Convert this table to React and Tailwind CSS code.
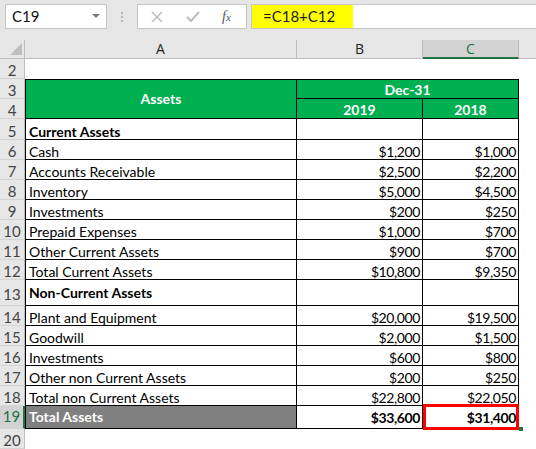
const rows = [
  { n: 5, label: 'Current Assets', bold: true },
  { n: 6, label: 'Cash', b: '$1,200', c: '$1,000' },
  { n: 7, label: 'Accounts Receivable', b: '$2,500', c: '$2,200' },
  { n: 8, label: 'Inventory', b: '$5,000', c: '$4,500' },
  { n: 9, label: 'Investments', b: '$200', c: '$250' },
  { n: 10, label: 'Prepaid Expenses', b: '$1,000', c: '$700' },
  { n: 11, label: 'Other Current Assets', b: '$900', c: '$700' },
  { n: 12, label: 'Total Current Assets', b: '$10,800', c: '$9,350' },
  { n: 13, label: 'Non-Current Assets', bold: true, tall: true },
  { n: 14, label: 'Plant and Equipment', b: '$20,000', c: '$19,500' },
  { n: 15, label: 'Goodwill', b: '$2,000', c: '$1,500' },
  { n: 16, label: 'Investments', b: '$600', c: '$800' },
  { n: 17, label: 'Other non Current Assets', b: '$200', c: '$250' },
  { n: 18, label: 'Total non Current Assets', b: '$22,800', c: '$22,050' },
]

const cellFont = { fontFamily: 'Lato, "Liberation Sans", sans-serif' }

function RowHead({ n, active, pb = 'pb-0' }) {
  return (
    <div
      className={
        'flex items-end justify-center border-b border-b-[#d4d4d4] text-[15px] leading-[15px] ' +
        pb +
        ' ' +
        (active
          ? 'bg-[#d2d2d2] text-[#217346] border-r-2 border-r-[#217346]'
          : 'bg-[#e6e6e6] text-[#444] border-r border-r-[#bdbdbd]')
      }
    >
      {n}
    </div>
  )
}

function ColHead({ label, active }) {
  return (
    <div
      className={
        'flex items-center justify-center border-r border-r-[#bdbdbd] text-[14px] ' +
        (active ? 'bg-[#d2d2d2] border-b-2 border-b-[#217346] text-[#217346]' : 'bg-[#e6e6e6] border-b border-b-[#bdbdbd] text-[#222]')
      }
      style={{ fontFamily: '"Open Sans", "Noto Sans", sans-serif' }}
    >
      {label}
    </div>
  )
}

export default function App() {
  return (
    <div className="h-[449px] w-[536px] overflow-hidden bg-white" style={cellFont}>
      {/* formula bar */}
      <div className="flex h-[40px] items-start bg-[#e6e6e6] pl-[5px] pt-[4px]">
        <div className="flex h-[25px] w-[102px] items-center justify-between border border-[#c6c6c6] bg-white pl-[6px] pr-[6px] text-[15px] text-[#111]">
          <span>C19</span>
          <svg width="8" height="5" viewBox="0 0 8 5">
            <polygon points="0,0 8,0 4,4" fill="#7a7a7a" />
          </svg>
        </div>
        <div className="flex h-[25px] w-[30px] flex-col items-center justify-center gap-[2px]">
          <span className="h-[2px] w-[2px] bg-[#b4b4b4]" />
          <span className="h-[2px] w-[2px] bg-[#b4b4b4]" />
          <span className="h-[2px] w-[2px] bg-[#b4b4b4]" />
        </div>
        <div className="flex h-[25px] w-[110px] items-center border border-[#c6c6c6] bg-white">
          <svg className="ml-[13px]" width="12" height="12" viewBox="0 0 12 12">
            <path d="M1 1L11 11M11 1L1 11" stroke="#bdbdbd" strokeWidth="1.6" fill="none" />
          </svg>
          <svg className="ml-[23px]" width="14" height="12" viewBox="0 0 14 12">
            <path d="M1 6L5 10L13 1" stroke="#bdbdbd" strokeWidth="2" fill="none" />
          </svg>
          <span
            className="ml-[22px] text-[14px] italic text-[#555]"
            style={{ fontFamily: '"Liberation Serif", serif' }}
          >
            f<span className="text-[11px]">x</span>
          </span>
        </div>
        <div className="ml-[4px] flex h-[25px] flex-1 border border-r-0 border-[#c6c6c6] bg-white">
          <div className="flex w-[101px] items-center bg-[#ffff00] pl-[11px] text-[15px] text-[#222]">=C18+C12</div>
        </div>
      </div>

      {/* sheet */}
      <div className="grid grid-cols-[25px_272px_126px_96px_1fr] grid-rows-[19px_20px_20px_20px_21px_20px_20px_20px_20px_20px_20px_20px_26px_20px_20px_20px_20px_20px_23px_20px] text-[14px] leading-[14px]">
        <div className="relative border-b border-r border-[#bdbdbd] bg-[#e6e6e6]">
          <svg className="absolute left-0 top-0" width="25" height="19" viewBox="0 0 25 19">
            <polygon points="22,3 22,15 10,15" fill="#bfbfbf" />
          </svg>
        </div>
        <ColHead label="A" />
        <ColHead label="B" />
        <ColHead label="C" active />
        <div className="border-b border-b-[#bdbdbd] bg-[#e6e6e6]" />

        {/* row 2 */}
        <RowHead n={2} />
        <div className="col-span-4" />

        {/* rows 3-4 header */}
        <RowHead n={3} />
        <div className="row-span-2 flex items-center justify-center border border-black bg-[#00b050] font-bold text-white">
          Assets
        </div>
        <div className="col-span-2 flex items-center justify-center border-b border-r border-t border-black bg-[#00b050] pt-[2px] font-bold text-white">
          Dec-31
        </div>
        <div />
        <RowHead n={4} />
        <div className="flex items-center justify-center border-b border-r border-black bg-[#00b050] pt-[2px] font-bold text-white">
          2019
        </div>
        <div className="flex items-center justify-center border-b border-r border-black bg-[#00b050] pt-[2px] font-bold text-white">
          2018
        </div>
        <div />

        {rows.map((r) => (
          <div key={r.n} className="contents">
            <RowHead n={r.n} pb={r.tall ? 'pb-[3px]' : 'pb-0'} />
            <div
              className={
                'flex border-b border-l border-r border-black pl-[3px] text-black ' +
                (r.tall ? 'items-center ' : 'items-end ') +
                (r.bold ? 'font-bold' : '')
              }
            >
              {r.label}
            </div>
            <div className="flex items-end justify-end border-b border-r border-black pr-[2px] tracking-[-0.4px] text-black">
              {r.b}
            </div>
            <div className="flex items-end justify-end border-b border-r border-black pr-[2px] tracking-[-0.4px] text-black">
              {r.c}
            </div>
            <div />
          </div>
        ))}

        {/* row 19 */}
        <RowHead n={19} active pb="pb-[4px]" />
        <div className="flex items-center border-b border-l border-r border-black bg-[#808080] pl-[3px] font-bold text-white">
          Total Assets
        </div>
        <div className="flex items-center justify-end border-b border-r border-black pr-[2px] pt-[2px] font-bold tracking-[-0.4px] text-black">
          $33,600
        </div>
        <div className="relative flex items-center justify-end border-b border-r border-black pr-[2px] pt-[2px] font-bold tracking-[-0.4px] text-black">
          $31,400
          <div className="absolute -bottom-[2px] -right-[1px] -top-[2px] left-0 border-[3px] border-[#ff0000]" />
          <div className="absolute -bottom-[3px] -right-[5px] h-[4px] w-[4px] bg-[#217346]" />
        </div>
        <div />

        {/* row 20 */}
        <RowHead n={20} />
        <div className="col-span-4" />
      </div>
    </div>
  )
}
